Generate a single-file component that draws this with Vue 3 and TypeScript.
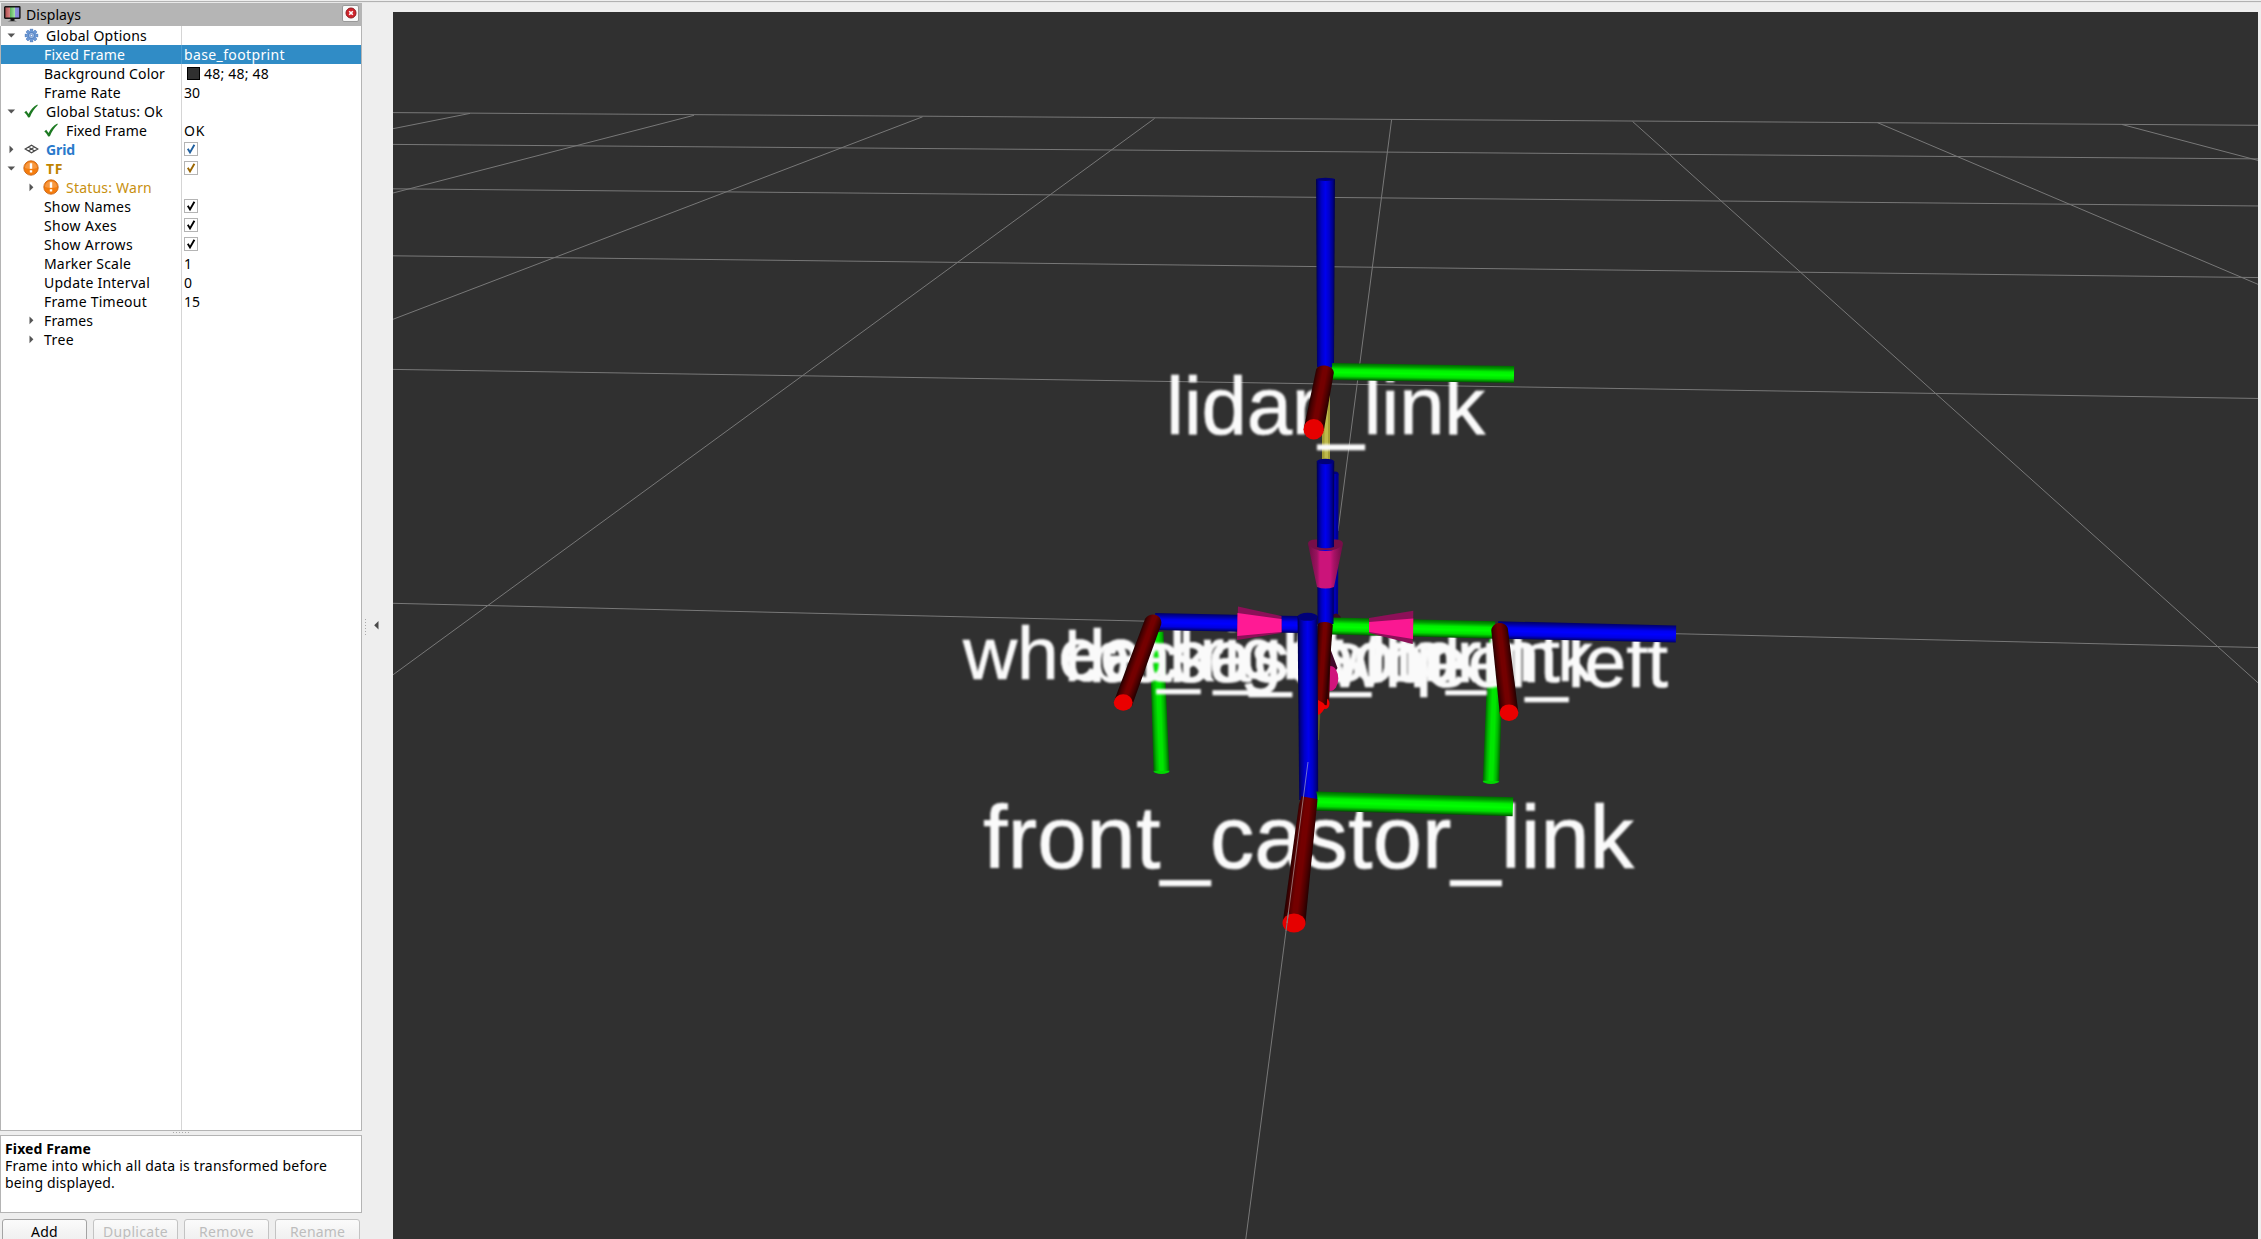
<script setup lang="ts">
import type { Directive } from 'vue'

type Icon = 'gear' | 'check' | 'grid' | 'warn'
interface Row {
  label: string
  width: number
  level: number
  arrow?: 'open' | 'closed'
  icon?: Icon
  value?: string
  valueWidth?: number
  swatch?: boolean
  check?: string
  tone?: string
  selected?: boolean
}

const rows: Row[] = [
  { label: 'Global Options', width: 101, level: 0, arrow: 'open', icon: 'gear' },
  { label: 'Fixed Frame', width: 81, level: 1, value: 'base_footprint', valueWidth: 101, selected: true },
  { label: 'Background Color', width: 121, level: 1, value: '48; 48; 48', valueWidth: 65, swatch: true },
  { label: 'Frame Rate', width: 77, level: 1, value: '30', valueWidth: 16 },
  { label: 'Global Status: Ok', width: 117, level: 0, arrow: 'open', icon: 'check' },
  { label: 'Fixed Frame', width: 81, level: 1, icon: 'check', value: 'OK', valueWidth: 21 },
  { label: 'Grid', width: 29, level: 0, arrow: 'closed', icon: 'grid', check: '#1f5f9f', tone: 'blue' },
  { label: 'TF', width: 17, level: 0, arrow: 'open', icon: 'warn', check: '#9a6500', tone: 'gold' },
  { label: 'Status: Warn', width: 86, level: 1, arrow: 'closed', icon: 'warn', tone: 'amber' },
  { label: 'Show Names', width: 87, level: 1, check: '#000' },
  { label: 'Show Axes', width: 73, level: 1, check: '#000' },
  { label: 'Show Arrows', width: 89, level: 1, check: '#000' },
  { label: 'Marker Scale', width: 87, level: 1, value: '1', valueWidth: 8 },
  { label: 'Update Interval', width: 106, level: 1, value: '0', valueWidth: 8 },
  { label: 'Frame Timeout', width: 103, level: 1, value: '15', valueWidth: 16 },
  { label: 'Frames', width: 49, level: 1, arrow: 'closed' },
  { label: 'Tree', width: 30, level: 1, arrow: 'closed' },
]

const buttons = [
  { label: 'Add', width: 27, enabled: true },
  { label: 'Duplicate', width: 65, enabled: false },
  { label: 'Remove', width: 55, enabled: false },
  { label: 'Rename', width: 55, enabled: false },
]

// Spreads the letters so that a label takes its nominal width
const vFit: Directive<HTMLElement, number> = {
  mounted(el, { value }) {
    const natural = el.getBoundingClientRect().width
    const count = (el.textContent ?? '').length
    if (count > 1) el.style.letterSpacing = `${(value - natural) / count}px`
  },
}

const gridLines = [
  [393, 112.6, 2261, 125.3],
  [393, 144.4, 2261, 158.9],
  [393, 188.8, 2261, 206],
  [393, 255.8, 2261, 277.6],
  [393, 369.4, 2261, 398.5],
  [393, 603.3, 2261, 647.6],
  [470, 113.4, 393, 128.7],
  [694, 115.3, 393, 193],
  [922.6, 116.8, 393, 319.3],
  [1154.5, 118.5, 393, 674.8],
  [1391.6, 119.7, 1338, 531],
  [1632.6, 121.5, 2261, 685.5],
  [1877.4, 122.6, 2261, 285.6],
  [2122, 124.5, 2261, 161.2],
]

interface Rod {
  x1: number
  y1: number
  x2: number
  y2: number
  w1: number
  w2: number
  fill: string
}
const rod = (x1: number, y1: number, x2: number, y2: number, w1: number, w2: number, fill: string): Rod =>
  ({ x1, y1, x2, y2, w1, w2, fill })

const place = (r: Rod) =>
  `translate(${r.x1} ${r.y1}) rotate(${(Math.atan2(r.y2 - r.y1, r.x2 - r.x1) * 180) / Math.PI})`
const shape = (r: Rod) => {
  const len = Math.hypot(r.x2 - r.x1, r.y2 - r.y1)
  return `0,${-r.w1 / 2} ${len},${-r.w2 / 2} ${len},${r.w2 / 2} 0,${r.w1 / 2}`
}

const wheelDrops = [
  rod(1156.5, 632, 1161.5, 771, 14, 16, 'lime'),
  rod(1496, 640, 1491, 781, 15, 16.5, 'lime'),
]
const upperRods = [
  rod(1325.5, 367, 1325.5, 179, 17, 19, 'blue'),
  rod(1332, 371.5, 1514, 374.6, 17, 17, 'green'),
]
const midRods = [
  rod(1155, 621.5, 1300, 624.5, 17, 17, 'bright'),
  rod(1498, 630, 1676, 634, 17.5, 17, 'bright'),
  rod(1332, 626, 1495, 630, 17, 17.5, 'green'),
  rod(1325.5, 461, 1325.5, 624, 17.5, 16, 'blue'),
]

const names = [
  { text: 'lidar_link', x: 1166, y: 434.4, size: 81.6, width: 319 },
  { text: 'front_castor_link', x: 983, y: 867.6, size: 88.4, width: 651 },
  { text: 'wheel_right', x: 963, y: 678.5, size: 75, width: 381 },
  { text: 'back_castor_link', x: 1064.5, y: 680.5, size: 70, width: 528 },
  { text: 'base_footprint', x: 1089, y: 682, size: 74, width: 471 },
  { text: 'base_link', x: 1169, y: 682, size: 74, width: 312 },
  { text: 'wheel_left', x: 1330, y: 686.6, size: 75, width: 338 },
]

const teeth = [0, 45, 90, 135]
</script>

<template>
  <div class="app">
    <div class="topline"></div>
    <div class="main">
      <aside class="dock">
        <header class="title">
          <svg class="monitor" width="17" height="17" viewBox="0 0 17 17">
            <defs>
              <linearGradient id="scr" x1="0" x2="1" y1="0" y2="0">
                <stop offset="0" stop-color="#a84848" /><stop offset=".33" stop-color="#d98080" />
                <stop offset=".34" stop-color="#58b058" /><stop offset=".65" stop-color="#a0e0a0" />
                <stop offset=".66" stop-color="#9090e0" /><stop offset="1" stop-color="#8080d0" />
              </linearGradient>
            </defs>
            <rect x=".7" y=".7" width="15.2" height="11.6" rx=".6" fill="url(#scr)" stroke="#151515" stroke-width="1.4" />
            <path d="M6.5 13h4v1.6h-4zM3.5 15.2q5-1.6 9.5 0z" fill="#151515" />
          </svg>
          <span class="name"><span v-fit="55">Displays</span></span>
          <div class="close">
            <svg width="12" height="12" viewBox="0 0 12 12">
              <circle cx="6" cy="6" r="5" fill="#d0242c" stroke="#8f1b20" />
              <path d="M4.200 4.200l3.600 3.600M7.800 4.200l-3.600 3.600" stroke="#fff" stroke-width="1.6" />
            </svg>
          </div>
        </header>

        <div class="tree">
          <div v-for="(r, i) in rows" :key="i" class="row" :class="[{ selected: r.selected }, r.tone]">
            <div class="key" :class="[`l${r.level}`, { plain: !r.icon }]">
              <span class="arrow">
                <svg v-if="r.arrow === 'open'" width="9" height="9" viewBox="0 0 9 9"><path d="M.5 2.500h7.600L4.300 6.600z" fill="#555" /></svg>
                <svg v-else-if="r.arrow" width="9" height="9" viewBox="0 0 9 9"><path d="M2.500 .4v7.800L6.400 4.300z" fill="#555" /></svg>
              </span>
              <span v-if="r.icon" class="icon">
                <svg v-if="r.icon === 'gear'" width="15" height="15" viewBox="-7.5 -7.5 15 15">
                  <g fill="#6c98d4" stroke="#3f6fb4" stroke-width=".5">
                    <rect v-for="a in teeth" :key="a" x="-1.4" y="-6.4" width="2.8" height="12.8" :transform="`rotate(${a})`" />
                  </g>
                  <circle r="4.8" fill="#6c98d4" />
                  <circle r="3" fill="#a8c4ec" stroke="#3f6fb4" stroke-width=".8" />
                  <circle r="1.2" fill="#fff" stroke="#3f6fb4" stroke-width=".7" />
                </svg>
                <svg v-else-if="r.icon === 'check'" width="15" height="15" viewBox="0 0 15 15">
                  <path d="M.3 8.400L2.200 6.800 4.600 10C6.600 5.900 9.200 2.700 13.400 .6L13.700 1.400C10.300 4.400 7.800 8.200 5.900 13.200L4.100 13.400C3.200 11.500 2 9.800 .3 8.400z" fill="#1d7a22" />
                </svg>
                <svg v-else-if="r.icon === 'grid'" width="15" height="15" viewBox="0 0 15 15">
                  <path d="M1.200 7L7.500 3.200 13.800 7 7.500 10.800zM4.300 5.100L10.600 8.900M10.600 5.100L4.300 8.900" fill="none" stroke="#484848" stroke-width="1.2" />
                </svg>
                <svg v-else class="warn" width="16" height="16" viewBox="0 0 16 16">
                  <circle cx="8" cy="8" r="7.2" fill="#f57c0c" stroke="#c8661a" stroke-width=".9" />
                  <path d="M2 8a6 6 0 0 1 12 0q-6 2-12 0z" fill="#fff" opacity=".22" />
                  <path d="M6.800 3.200h2.400v5.600H6.800zM6.800 10.200h2.400v2.300H6.800z" fill="#fff" />
                </svg>
              </span>
              <span v-fit="r.width">{{ r.label }}</span>
            </div>
            <div class="value">
              <i v-if="r.swatch" class="swatch"></i>
              <span v-if="r.value" v-fit="r.valueWidth ?? 10">{{ r.value }}</span>
              <span v-if="r.check" class="box">
                <svg width="12" height="12" viewBox="0 0 12 12"><path d="M2.800 5.800L5 9.400 9.400 1.800" fill="none" :stroke="r.check" stroke-width="1.9" /></svg>
              </span>
            </div>
          </div>
          <div class="rest"><div class="key"></div><div class="value"></div></div>
        </div>

        <div class="grip"><i v-for="n in 6" :key="n"></i></div>

        <div class="help">
          <div><b v-fit="86">Fixed Frame</b></div>
          <div><span v-fit="322">Frame into which all data is transformed before</span></div>
          <div><span v-fit="110">being displayed.</span></div>
        </div>

        <div class="buttons">
          <button v-for="b in buttons" :key="b.label" :class="{ off: !b.enabled }"><span v-fit="b.width">{{ b.label }}</span></button>
        </div>
      </aside>

      <div class="splitter">
        <div class="dots"><i v-for="n in 6" :key="n"></i></div>
        <svg width="5" height="9" viewBox="0 0 5 9"><path d="M4.500 0v8.400L.2 4.200z" fill="#4a4a4a" /></svg>
      </div>

      <svg class="view" width="1865" height="1227" viewBox="393 12 1865 1227">
        <defs>
          <linearGradient id="blue" x1="0" x2="0" y1="0" y2="1">
            <stop offset="0" stop-color="#000048" /><stop offset=".13" stop-color="#00008c" /><stop offset=".3" stop-color="#0000c8" />
            <stop offset=".5" stop-color="#0000ee" /><stop offset=".7" stop-color="#0000c8" /><stop offset=".87" stop-color="#00008c" /><stop offset="1" stop-color="#000048" />
          </linearGradient>
          <linearGradient id="bright" x1="0" x2="0" y1="0" y2="1">
            <stop offset="0" stop-color="#000068" /><stop offset=".18" stop-color="#0000a8" /><stop offset=".36" stop-color="#0000f0" />
            <stop offset=".55" stop-color="#0000ff" /><stop offset=".78" stop-color="#0000e0" /><stop offset="1" stop-color="#000060" />
          </linearGradient>
          <linearGradient id="green" x1="0" x2="0" y1="0" y2="1">
            <stop offset="0" stop-color="#006800" /><stop offset=".16" stop-color="#009800" /><stop offset=".36" stop-color="#00f000" />
            <stop offset=".55" stop-color="#00ff00" /><stop offset=".76" stop-color="#00e000" /><stop offset=".9" stop-color="#009000" /><stop offset="1" stop-color="#005000" />
          </linearGradient>
          <linearGradient id="lime" x1="0" x2="0" y1="0" y2="1">
            <stop offset="0" stop-color="#006000" /><stop offset=".2" stop-color="#00b400" /><stop offset=".4" stop-color="#00e600" />
            <stop offset=".6" stop-color="#00e600" /><stop offset=".8" stop-color="#00b400" /><stop offset="1" stop-color="#006000" />
          </linearGradient>
          <linearGradient id="red" x1="0" x2="0" y1="0" y2="1">
            <stop offset="0" stop-color="#200000" /><stop offset=".2" stop-color="#4c0000" /><stop offset=".42" stop-color="#740000" />
            <stop offset=".6" stop-color="#740000" /><stop offset=".82" stop-color="#4c0000" /><stop offset="1" stop-color="#200000" />
          </linearGradient>
          <linearGradient id="pinkv" x1="0" x2="1" y1="0" y2="0">
            <stop offset="0" stop-color="#6a0d42" /><stop offset=".26" stop-color="#9c1260" /><stop offset=".34" stop-color="#cb147a" />
            <stop offset=".64" stop-color="#cb147a" /><stop offset=".74" stop-color="#a81266" /><stop offset="1" stop-color="#6a0d42" />
          </linearGradient>
          <filter id="soft" x="-2%" y="-10%" width="104%" height="120%"><feGaussianBlur stdDeviation="1" /></filter>
        </defs>

        <rect x="393" y="12" width="1865" height="1227" fill="#303030" />
        <line v-for="(l, i) in gridLines" :key="i" class="gridline" :x1="l[0]" :y1="l[1]" :x2="l[2]" :y2="l[3]" />
        <line class="gridline" x1="1289" y1="908" x2="1245.8" y2="1239" />

        <!-- wheel axes pointing down, shaft below the lidar -->
        <ellipse cx="1161.5" cy="771" rx="8" ry="3" fill="#00d800" />
        <ellipse cx="1491" cy="781" rx="8.2" ry="3" fill="#00d800" />
        <polygon v-for="(r, i) in wheelDrops" :key="i" :points="shape(r)" :transform="place(r)" :fill="`url(#${r.fill})`" />
        <path d="M1322 395h8v68h-8z" fill="#a39d34" />
        <path d="M1324.5 395h3.5v68h-3.5z" fill="#bdb94a" />
        <path d="M1318 700h3l-2 40h-1z" fill="#5e5a20" />

        <g class="names" filter="url(#soft)">
          <text v-for="n in names" :key="n.text" :x="n.x" :y="n.y" :font-size="n.size" :textLength="n.width">{{ n.text }}</text>
        </g>

        <!-- rear castor frame -->
        <ellipse cx="1335" cy="474" rx="3.6" ry="2.5" fill="#000080" />
        <path d="M1330 474h8.6l-.6 145h-8z" fill="#000092" />
        <path d="M1333.8 474h2.4v145h-2.4z" fill="#0000b4" />
        <ellipse cx="1336" cy="623" rx="6" ry="9.5" fill="#3c0a22" />
        <path d="M1330 648l7.500 20-9 14z" fill="#420a2a" />

        <!-- lidar frame -->
        <polygon v-for="(r, i) in upperRods" :key="i" :points="shape(r)" :transform="place(r)" :fill="`url(#${r.fill})`" />
        <ellipse cx="1325.5" cy="179.3" rx="9.3" ry="1.6" fill="#000078" />
        <g transform="translate(1325 371) rotate(100.8)">
          <path d="M0 -9C-7 -7 -7 7 0 9L59 10V-10z" fill="url(#red)" />
        </g>
        <circle cx="1313.7" cy="429.2" r="10.2" fill="#e60000" />

        <!-- base frames and wheel arrows -->
        <polygon v-for="(r, i) in midRods" :key="i" :points="shape(r)" :transform="place(r)" :fill="`url(#${r.fill})`" />
        <ellipse cx="1325.5" cy="461.5" rx="8.7" ry="2.8" fill="#000078" />
        <path d="M1308 544Q1308 539 1317 539.5V547Q1325.500 549.500 1334 547V539.500Q1343 539 1343 544L1340 550H1311z" fill="#760e48" />
        <path d="M1308 544Q1313 551 1325.500 551T1343 544L1334 587Q1325.500 590 1317 587z" fill="url(#pinkv)" />
        <path d="M1238 606.500L1281.500 616V633L1237 640z" fill="#8c1058" />
        <path d="M1237.500 613L1281.500 619V632L1237.300 636z" fill="#ff1a94" />
        <path d="M1413.300 610.800L1369 618V633L1412.700 644z" fill="#8c1058" />
        <path d="M1413.300 618.500L1369 622V632L1413 639z" fill="#fa1892" />

        <g transform="translate(1153.200 621.500) rotate(110.200)">
          <path d="M0 -8.500C-9.500 -7 -9.500 6 0 8.500L87 9.300V-9.300z" fill="url(#red)" />
        </g>
        <ellipse cx="1123.200" cy="702.500" rx="9.400" ry="8.300" fill="#ea0000" />
        <g transform="translate(1499.500 629) rotate(83.500)">
          <path d="M0 -8.300C-8 -6 -8 6 0 8.300L84 9.300V-9.300z" fill="url(#red)" />
        </g>
        <ellipse cx="1509" cy="712.700" rx="9.400" ry="8.300" fill="#ea0000" />

        <ellipse cx="1330.500" cy="678.500" rx="7.800" ry="12.500" fill="#d0147c" />
        <path d="M1326 640h5l-2 66h-7z" fill="#460000" />
        <ellipse cx="1325" cy="703.500" rx="4.500" ry="5.500" fill="#ea0000" />
        <g transform="translate(1325.300 625) rotate(94)">
          <path d="M0 -7.500C-4 -7 -4 7 0 7.500L80 7V-7z" fill="url(#red)" />
        </g>
        <path d="M1318 700Q1323 702 1325.500 706 1323 713 1318 715z" fill="#f00000" />

        <!-- front castor frame -->
        <g transform="translate(1308.700 800) rotate(-90.350)">
          <path d="M0 -9.500V9.500L184 10V-10z" fill="url(#blue)" />
        </g>
        <ellipse cx="1307.600" cy="616.800" rx="10" ry="4" fill="#000078" />
        <g transform="translate(1316 801) rotate(1.650)">
          <path d="M0 -9.500H197V9.700H0Q3 0 0 -9.500z" fill="url(#green)" />
        </g>
        <g transform="translate(1308.500 800) rotate(96.700)">
          <path d="M-2 -8.500L5 -9 123 -11.300V11.300L5 9 -3 7.500z" fill="url(#red)" />
        </g>
        <ellipse cx="1294" cy="923" rx="11.500" ry="9.400" fill="#e60000" />
        <line x1="1308" y1="762" x2="1287" y2="923" stroke="#c8c8c8" stroke-opacity=".55" />
        <line class="gridline" x1="1288.500" y1="912" x2="1286" y2="931" />
      </svg>
    </div>
  </div>
</template>

<style>
body {
  margin: 0;
  overflow: hidden;
}
</style>

<style scoped>
.app {
  width: 100vw;
  height: 100vh;
  display: flex;
  flex-direction: column;
  overflow: hidden;
  background: #eee;
  font: 14px/19px 'Noto Sans', sans-serif;
  color: #000;
}
.app * {
  box-sizing: border-box;
}
.topline {
  flex: 0 0 3px;
  background: linear-gradient(#eee 1px, #b2b2b2 1px 2px, #e8e8e8 2px);
}
.main {
  flex: 1;
  min-height: 0;
  display: flex;
}
.dock {
  flex: 0 0 362px;
  display: flex;
  flex-direction: column;
  white-space: nowrap;
}
.title {
  flex: 0 0 23px;
  display: flex;
  align-items: center;
  margin-left: 1px;
  padding: 0 3px 0 3px;
  background: #b5b5b5;
}
.title .name {
  flex: 1;
  padding: 0 0 1px 5px;
}
.monitor {
  margin-bottom: 1px;
}
.close {
  width: 17px;
  height: 17px;
  margin-top: -3px;
  display: flex;
  align-items: center;
  justify-content: center;
  border: 1px solid #999;
  border-radius: 2px;
  background: #f8f8f8;
}
.tree {
  flex: 0 0 1105px;
  display: flex;
  flex-direction: column;
  border: 1px solid #b4b4b4;
  border-top: 0;
  background: #fff;
}
.row {
  flex: 0 0 19px;
  display: flex;
}
.rest {
  flex: 1;
  display: flex;
}
.key {
  flex: 0 0 181px;
  display: flex;
  align-items: center;
  border-right: 1px solid #d5d5d5;
}
.row .key {
  padding-left: 6px;
}
.row .key.l1 {
  padding-left: 26px;
}
.arrow {
  flex: 0 0 17px;
  height: 9px;
  line-height: 0;
}
.icon {
  flex: 0 0 22px;
  height: 16px;
  line-height: 0;
}
.value {
  flex: 1;
  display: flex;
  align-items: center;
  padding-left: 2px;
}
.swatch {
  width: 13px;
  height: 13px;
  margin: 0 4px 0 3px;
  border: 1px solid #000;
  background: #303030;
}
.box {
  width: 14px;
  height: 14px;
  margin-bottom: 1px;
  border: 1px solid #b4b4b4;
  background: #fff;
  line-height: 0;
}
.selected {
  background: #308cc6;
  color: #fff;
}
.selected .key {
  border-color: #4b9bd0;
}
.blue {
  color: #2a7acb;
  font-weight: 700;
}
.gold {
  color: #c08400;
  font-weight: 700;
}
.amber {
  color: #c8900f;
}
.warn {
  margin: -1px 0 0 -1px;
}
.grip {
  flex: 0 0 4px;
  display: flex;
  justify-content: center;
  gap: 2px;
  padding-top: 1px;
}
.grip i,
.dots i {
  width: 1px;
  height: 1px;
  background: #aaa;
}
.help {
  flex: 0 0 78px;
  padding: 4px 4px;
  border: 1px solid #b4b4b4;
  background: #fff;
  line-height: 17px;
}
.buttons {
  display: flex;
  gap: 6px;
  padding: 6px 2px 0;
}
button {
  flex: 0 0 85px;
  height: 26px;
  padding: 0 0 2px;
  border: 1px solid #a4a4a4;
  border-radius: 3px;
  background: linear-gradient(#fbfbfb, #ededed);
  font: inherit;
  color: #000;
}
button.off {
  border-color: #c3c3c3;
  color: #bdbdbd;
}
.splitter {
  flex: 0 0 31px;
  display: flex;
  align-items: center;
  gap: 8px;
  padding: 0 0 0 3px;
}
.dots {
  display: flex;
  flex-direction: column;
  gap: 2px;
  margin-top: 12px;
}
.splitter svg {
  margin-top: 9px;
}
.view {
  flex: none;
  margin-top: 9px;
}
.gridline {
  stroke: #787878;
  stroke-width: 1;
}
.names text {
  font-family: 'Liberation Sans', Arial, sans-serif;
  fill: #fafafa;
  stroke: #fafafa;
  stroke-width: 0.7;
}
</style>
